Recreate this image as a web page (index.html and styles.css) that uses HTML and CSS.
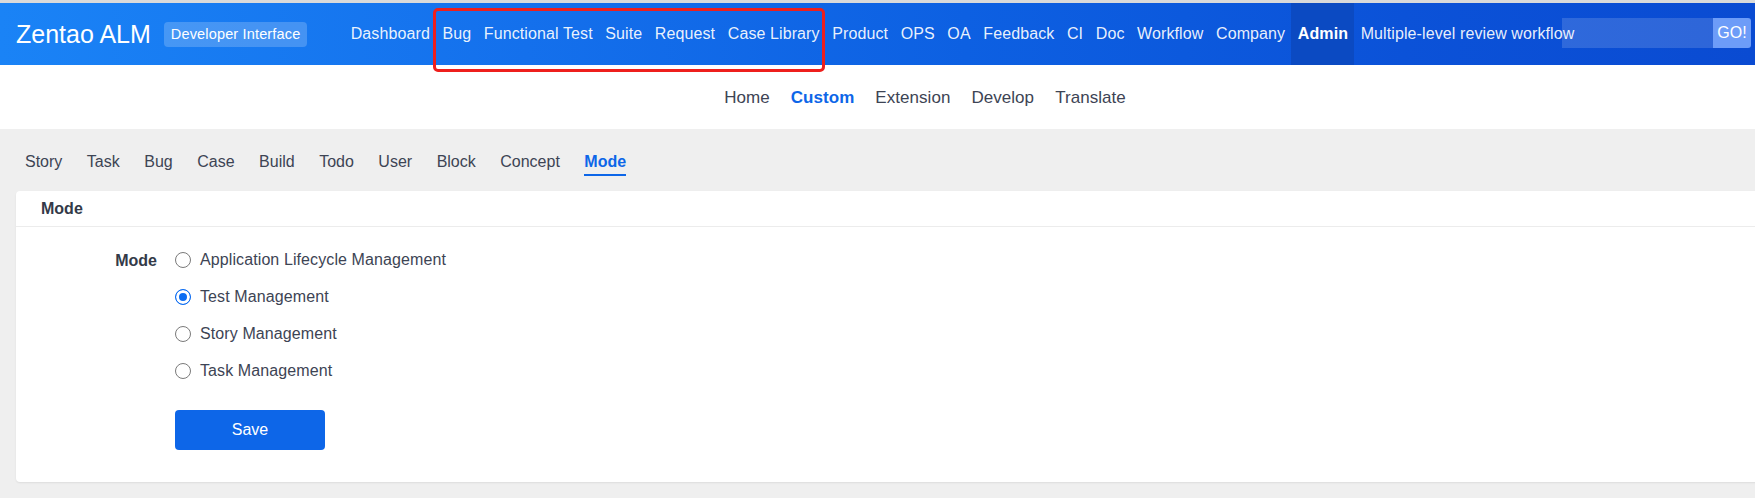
FILE: index.html
```html
<!DOCTYPE html>
<html lang="en">
<head>
<meta charset="utf-8">
<title>Zentao ALM - Custom Mode</title>
<link rel="stylesheet" href="styles.css">
</head>
<body>
<header class="topbar">
  <div class="brand">Zentao ALM</div>
  <span class="badge">Developer Interface</span>
  <nav class="mainnav">
    <a class="nav-item">Dashboard</a>
    <a class="nav-item">Bug</a>
    <a class="nav-item">Functional Test</a>
    <a class="nav-item">Suite</a>
    <a class="nav-item">Request</a>
    <a class="nav-item">Case Library</a>
    <a class="nav-item">Product</a>
    <a class="nav-item">OPS</a>
    <a class="nav-item">OA</a>
    <a class="nav-item">Feedback</a>
    <a class="nav-item">CI</a>
    <a class="nav-item">Doc</a>
    <a class="nav-item">Workflow</a>
    <a class="nav-item">Company</a>
    <a class="nav-item active">Admin</a>
    <a class="nav-item">Multiple-level review workflow</a>
  </nav>
  <form class="search">
    <span class="search-input"></span>
    <button type="button" class="go">GO!</button>
  </form>
</header>
<div class="highlight"></div>

<nav class="subnav">
  <a class="sub-item">Home</a>
  <a class="sub-item active">Custom</a>
  <a class="sub-item">Extension</a>
  <a class="sub-item">Develop</a>
  <a class="sub-item">Translate</a>
</nav>

<main class="content">
  <nav class="tabs">
    <a class="tab">Story</a>
    <a class="tab">Task</a>
    <a class="tab">Bug</a>
    <a class="tab">Case</a>
    <a class="tab">Build</a>
    <a class="tab">Todo</a>
    <a class="tab">User</a>
    <a class="tab">Block</a>
    <a class="tab">Concept</a>
    <a class="tab active">Mode</a>
  </nav>

  <section class="card">
    <div class="card-head">Mode</div>
    <div class="card-body">
      <div class="form-row">
        <div class="form-label">Mode</div>
        <div class="options">
          <label class="option"><input type="radio" name="mode" class="radio"><span>Application Lifecycle Management</span></label>
          <label class="option"><input type="radio" name="mode" class="radio" checked><span>Test Management</span></label>
          <label class="option"><input type="radio" name="mode" class="radio"><span>Story Management</span></label>
          <label class="option"><input type="radio" name="mode" class="radio"><span>Task Management</span></label>
        </div>
      </div>
      <button type="button" class="save">Save</button>
    </div>
  </section>
</main>
</body>
</html>
```

FILE: styles.css
```css
* { box-sizing: border-box; }

html, body {
  margin: 0;
  padding: 0;
}

body {
  font-family: "Liberation Sans", Arial, Helvetica, sans-serif;
  background: #efefef;
  color: #3d4454;
  overflow-x: hidden;
  position: relative;
  width: 1755px;
}

a { text-decoration: none; cursor: pointer; }

/* ---------- top bar ---------- */
.topbar {
  position: relative;
  height: 65px;
  border-top: 3px solid #dadada;
  background: linear-gradient(90deg, #1a83f6 0%, #1470ec 30%, #0d60e2 55%, #0b52d8 80%, #0a4bd2 100%);
  display: flex;
  align-items: center;
  padding-left: 16px;
  white-space: nowrap;
  overflow: hidden;
}

.brand {
  font-size: 25px;
  color: #ffffff;
  line-height: 1;
}

.badge {
  margin-left: 13px;
  height: 25px;
  line-height: 25px;
  padding: 0 7px;
  font-size: 14.5px;
  letter-spacing: 0.16px;
  color: #ffffff;
  background: rgba(255, 255, 255, 0.2);
  border-radius: 4px;
}

.mainnav {
  display: flex;
  height: 62px;
  margin-left: 37px;
}

.nav-item {
  display: block;
  height: 62px;
  line-height: 62px;
  padding: 0 6.3px;
  font-size: 16px;
  letter-spacing: 0.1px;
  color: rgba(255, 255, 255, 0.92);
}

.nav-item.active {
  background: #0b4ac2;
  color: #ffffff;
  font-weight: bold;
}

.search {
  position: absolute;
  right: 4px;
  top: 15px;
  display: flex;
  height: 30px;
  margin: 0;
}

.search-input {
  display: block;
  width: 151px;
  height: 30px;
  background: rgba(255, 255, 255, 0.15);
}

.go {
  width: 38px;
  height: 30px;
  border: none;
  padding: 0;
  background: #6d9cf8;
  color: #ffffff;
  font-family: "Liberation Sans", Arial, sans-serif;
  font-size: 16px;
  border-radius: 0 3px 3px 0;
}

/* annotation box drawn over the nav */
.highlight {
  position: absolute;
  left: 433px;
  top: 8px;
  width: 392px;
  height: 64px;
  border: 3px solid #ee1f1c;
  border-radius: 5px;
  pointer-events: none;
}

/* ---------- sub navigation ---------- */
.subnav {
  height: 64px;
  background: #ffffff;
  display: flex;
  justify-content: center;
  align-items: center;
  padding-left: 95px;
  padding-top: 1px;
}

.sub-item {
  padding: 0 10.5px;
  font-size: 17px;
  letter-spacing: 0.05px;
  color: #3d4454;
}

.sub-item.active {
  color: #0d66e8;
  font-weight: bold;
}

/* ---------- content ---------- */
.content {
  padding: 0 0 15px 16px;
}

.tabs {
  height: 62px;
  display: flex;
  align-items: flex-start;
  gap: 24.5px;
  padding: 23px 0 0 9px;
}

.tab {
  font-size: 16px;
  line-height: 20px;
  color: #3d4454;
  padding-bottom: 2px;
  border-bottom: 2px solid transparent;
}

.tab.active {
  color: #0d66e8;
  font-weight: bold;
  border-bottom-color: #0d66e8;
}

.card {
  background: #ffffff;
  border-radius: 4px;
  margin-right: -8px;
  box-shadow: 0 1px 2px rgba(0, 0, 0, 0.08);
}

.card-head {
  height: 36px;
  line-height: 35px;
  padding-left: 25px;
  border-bottom: 1px solid #ececec;
  font-size: 16px;
  font-weight: bold;
  color: #333a48;
}

.card-body {
  padding: 14.5px 0 32px 0;
}

.form-row {
  display: flex;
  align-items: flex-start;
}

.form-label {
  width: 141px;
  text-align: right;
  line-height: 37px;
  font-size: 16px;
  font-weight: bold;
  color: #333a48;
}

.options {
  margin-left: 18px;
  display: flex;
  flex-direction: column;
}

.option {
  display: flex;
  align-items: center;
  height: 37px;
  gap: 9px;
  font-size: 16px;
  letter-spacing: 0.1px;
  color: #3d4454;
  cursor: pointer;
}

.radio {
  appearance: none;
  -webkit-appearance: none;
  width: 16px;
  height: 16px;
  margin: 0;
  border: 1px solid #7a7a7a;
  border-radius: 50%;
  background: #ffffff;
}

.radio:checked {
  border-color: #0b6cf2;
  background: #0b6cf2;
  box-shadow: inset 0 0 0 3px #ffffff;
}

.save {
  display: block;
  margin: 20.5px 0 0 159px;
  width: 150px;
  height: 40px;
  border: none;
  border-radius: 4px;
  background: #0d66e8;
  color: #ffffff;
  font-family: "Liberation Sans", Arial, sans-serif;
  font-size: 16px;
}
```
